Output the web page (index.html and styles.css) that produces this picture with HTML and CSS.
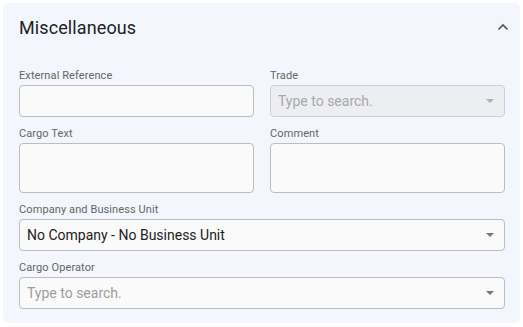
FILE: index.html
```html
<!DOCTYPE html>
<html lang="en">

<head>
    <meta charset="UTF-8">
    <meta name="viewport" content="width=device-width, initial-scale=1.0">
    <title>Miscellaneous</title>
    <link rel="stylesheet" href="styles.css">
</head>

<body>
    <div class="panel">
        <div class="panel-header">
            <h2>Miscellaneous</h2>
            <svg class="chevron" width="12" height="8" viewBox="0 0 12 8">
                <path d="M1.5 6.5 L6 2 L10.5 6.5" fill="none" stroke="#555" stroke-width="1.6" />
            </svg>
        </div>

        <div class="panel-body">
            <div class="field">
                <label>External Reference</label>
                <div class="control"></div>
            </div>
            <div class="field">
                <label>Trade</label>
                <div class="control select disabled">
                    <span class="placeholder">Type to search.</span>
                    <span class="arrow"></span>
                </div>
            </div>
            <div class="field">
                <label>Cargo Text</label>
                <div class="control area"></div>
            </div>
            <div class="field">
                <label>Comment</label>
                <div class="control area"></div>
            </div>
            <div class="field wide">
                <label>Company and Business Unit</label>
                <div class="control select">
                    <span class="value">No Company - No Business Unit</span>
                    <span class="arrow"></span>
                </div>
            </div>
            <div class="field wide">
                <label>Cargo Operator</label>
                <div class="control select">
                    <span class="placeholder">Type to search.</span>
                    <span class="arrow"></span>
                </div>
            </div>
        </div>
    </div>
</body>

</html>
```

FILE: styles.css
```css
body {
    font-family: Roboto, 'Liberation Sans', sans-serif;
    background-color: #fff;
    margin: 3px;
    color: #222;
}

.panel {
    background-color: #f3f6fd;
    border-radius: 5px;
    width: 517px;
    height: 320px;
    box-sizing: border-box;
}

.panel-header {
    display: flex;
    align-items: center;
    justify-content: space-between;
    height: 48px;
    padding: 0 11px 0 16px;
}

.panel-header h2 {
    margin: 0;
    font-size: 18px;
    font-weight: 400;
    letter-spacing: 0.1px;
    color: #222;
}

.chevron {
    display: block;
}

.panel-body {
    display: grid;
    grid-template-columns: 1fr 1fr;
    column-gap: 16px;
    row-gap: 9px;
    padding: 17px 15px 0 16px;
}

.field {
    display: flex;
    flex-direction: column;
    gap: 2px;
}

.field.wide {
    grid-column: span 2;
}

label {
    font-size: 11px;
    line-height: 15px;
    letter-spacing: 0.1px;
    color: #666;
}

.control {
    height: 32px;
    box-sizing: border-box;
    background-color: #fafafa;
    border: 1px solid #bdbdbd;
    border-radius: 4px;
    display: flex;
    align-items: center;
    padding: 0 7px;
}

.control.area {
    height: 50px;
}

.control.disabled {
    background-color: #eceef1;
    border-color: #cfd0d3;
}

.placeholder {
    font-size: 14px;
    color: #9e9e9e;
    flex: 1;
}

.disabled .placeholder {
    color: #a8a8a8;
}

.value {
    font-size: 14px;
    color: #222;
    flex: 1;
}

.arrow {
    width: 0;
    height: 0;
    border-left: 4.5px solid transparent;
    border-right: 4.5px solid transparent;
    border-top: 4.5px solid #777;
    margin-right: 3px;
}

.disabled .arrow {
    border-top-color: #b0b0b0;
}
```
